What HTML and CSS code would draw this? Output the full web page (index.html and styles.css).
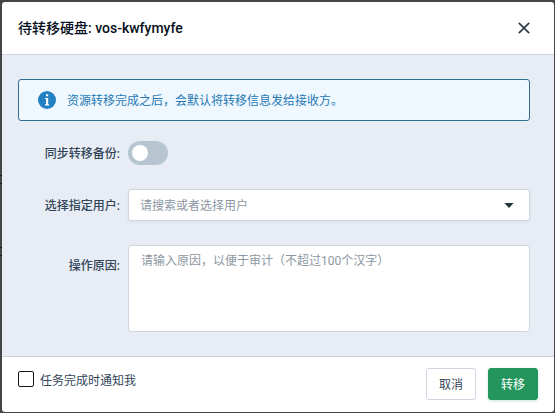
FILE: index.html
```html
<!DOCTYPE html>
<html lang="zh-CN">
<head>
<meta charset="utf-8">
<title>待转移硬盘</title>
<link rel="stylesheet" href="styles.css">
</head>
<body>
<div class="backdrop">
  <i class="page-mark mark-top"></i>
  <i class="page-mark mark-bottom"></i>
  <section class="dialog">
    <header class="header">
      <h1 class="title">待转移硬盘: vos-kwfymyfe</h1>
      <svg class="close" width="12" height="12" viewBox="0 0 12 12"><path d="M.8.8l10.4 10.4M11.2.8L.8 11.2"/></svg>
    </header>
    <main class="content">
      <div class="alert">
        <svg class="info" width="18" height="18" viewBox="0 0 18 18"><circle cx="9" cy="9" r="9"/><path d="M8 3.2h2.2v2.1H8zM7 6.9h3.2v6.4h.9v1.2H7v-1.2h1V8.1H7z"/></svg>
        <span>资源转移完成之后，会默认将转移信息发给接收方。</span>
      </div>
      <div class="row row-switch">
        <span class="label">同步转移备份:</span>
        <span class="switch"><span class="knob"></span></span>
      </div>
      <div class="row row-user">
        <span class="label">选择指定用户:</span>
        <div class="field select"><span>请搜索或者选择用户</span><svg class="caret" width="10" height="5" viewBox="0 0 10 5"><path d="M.3 0h9.4L5 5z"/></svg></div>
      </div>
      <div class="row row-reason">
        <span class="label">操作原因:</span>
        <div class="field reason">请输入原因，以便于审计（不超过100个汉字）</div>
      </div>
    </main>
    <footer class="footer">
      <label class="notify"><span class="checkbox"></span><span>任务完成时通知我</span></label>
      <div class="actions">
        <button class="button">取消</button>
        <button class="button primary">转移</button>
      </div>
    </footer>
  </section>
</div>
</body>
</html>
```
FILE: styles.css
```css
* { box-sizing: border-box; }
body {
  margin: 0;
  font: 12px/20px Roboto, "Noto Sans CJK SC", sans-serif;
  color: #324558;
}
.backdrop {
  position: relative;
  height: 413px;
  padding: 2px 1px 1px 2px;
  background: #454547;
  overflow: hidden;
}
/* Rows of the dimmed page that show at the dialog's left edge */
.page-mark {
  position: absolute;
  left: 0;
  width: 2px;
  height: 9px;
  border: solid #17181b;
  border-width: 1px 0;
}
.mark-top { top: 175px; }
.mark-bottom { top: 247px; }
.dialog {
  display: flex;
  flex-direction: column;
  height: 410px;
  border-radius: 3px;
  background: #fff;
  overflow: hidden;
}
.header {
  display: flex;
  align-items: center;
  justify-content: space-between;
  height: 53px;
  padding: 0 24px 0 16px;
  border-bottom: 1px solid #cbd2dc;
}
.title {
  margin: 0;
  font-size: 14px;
  font-weight: 500;
  color: #060f20;
}
.close { fill: none; stroke: #303c49; stroke-width: 1.7; }
.content {
  height: 301px;
  padding: 24px 24px 0 16px;
  background: #e8edf5;
}
.alert {
  display: flex;
  align-items: center;
  gap: 11px;
  height: 42px;
  padding-left: 19px;
  border: 1px solid #326e96;
  border-radius: 3px;
  background: #eff8ff;
  color: #2779b4;
}
.alert span { padding-top: 2px; }
.info circle { fill: #2380c2; }
.info path { fill: #fff; }
.row { display: flex; align-items: flex-start; gap: 8px; }
.label {
  width: 102px;
  text-align: right;
  font-weight: 500;
  color: #324558;
}
.row-switch { margin-top: 20px; }
.row-switch .label { padding-top: 3px; }
.row-user { margin-top: 24px; }
.row-user .label { padding-top: 7px; }
.row-reason { margin-top: 24px; }
.row-reason .label { padding-top: 11px; }
.switch {
  width: 40px;
  height: 24px;
  padding: 4px;
  border-radius: 12px;
  background: #b7c5d1;
}
.knob {
  display: block;
  width: 16px;
  height: 16px;
  border-radius: 50%;
  background: #fff;
}
.field {
  width: 402px;
  border: 1px solid #cdd6e1;
  border-radius: 3px;
  background: #fff;
  color: #8c97a2;
}
.select {
  display: flex;
  align-items: center;
  justify-content: space-between;
  height: 32px;
  padding: 0 15px 0 11px;
  box-shadow: 0 1px 3px #c8d2df80;
}
.select span { padding-top: 2px; }
.caret { fill: #26363e; }
.reason { height: 87px; padding: 5px 12px; }
.footer {
  display: flex;
  justify-content: space-between;
  height: 56px;
  padding: 11px 16px 0;
  border-top: 1px solid #cbd2dc;
}
.notify { display: flex; gap: 6px; padding-top: 3px; }
.checkbox {
  width: 16px;
  height: 16px;
  border: 1px solid #111820;
  border-radius: 2px;
}
.actions { display: flex; gap: 12px; }
.button {
  width: 50px;
  height: 32px;
  padding: 2px 0 0;
  border: 1px solid #cdd6e1;
  border-radius: 3px;
  background: #fff;
  font: inherit;
  color: #324558;
}
.primary {
  border-color: #24965d;
  background: #24965d;
  color: #fff;
  box-shadow: 0 1px 3px #24965d40;
}
```
